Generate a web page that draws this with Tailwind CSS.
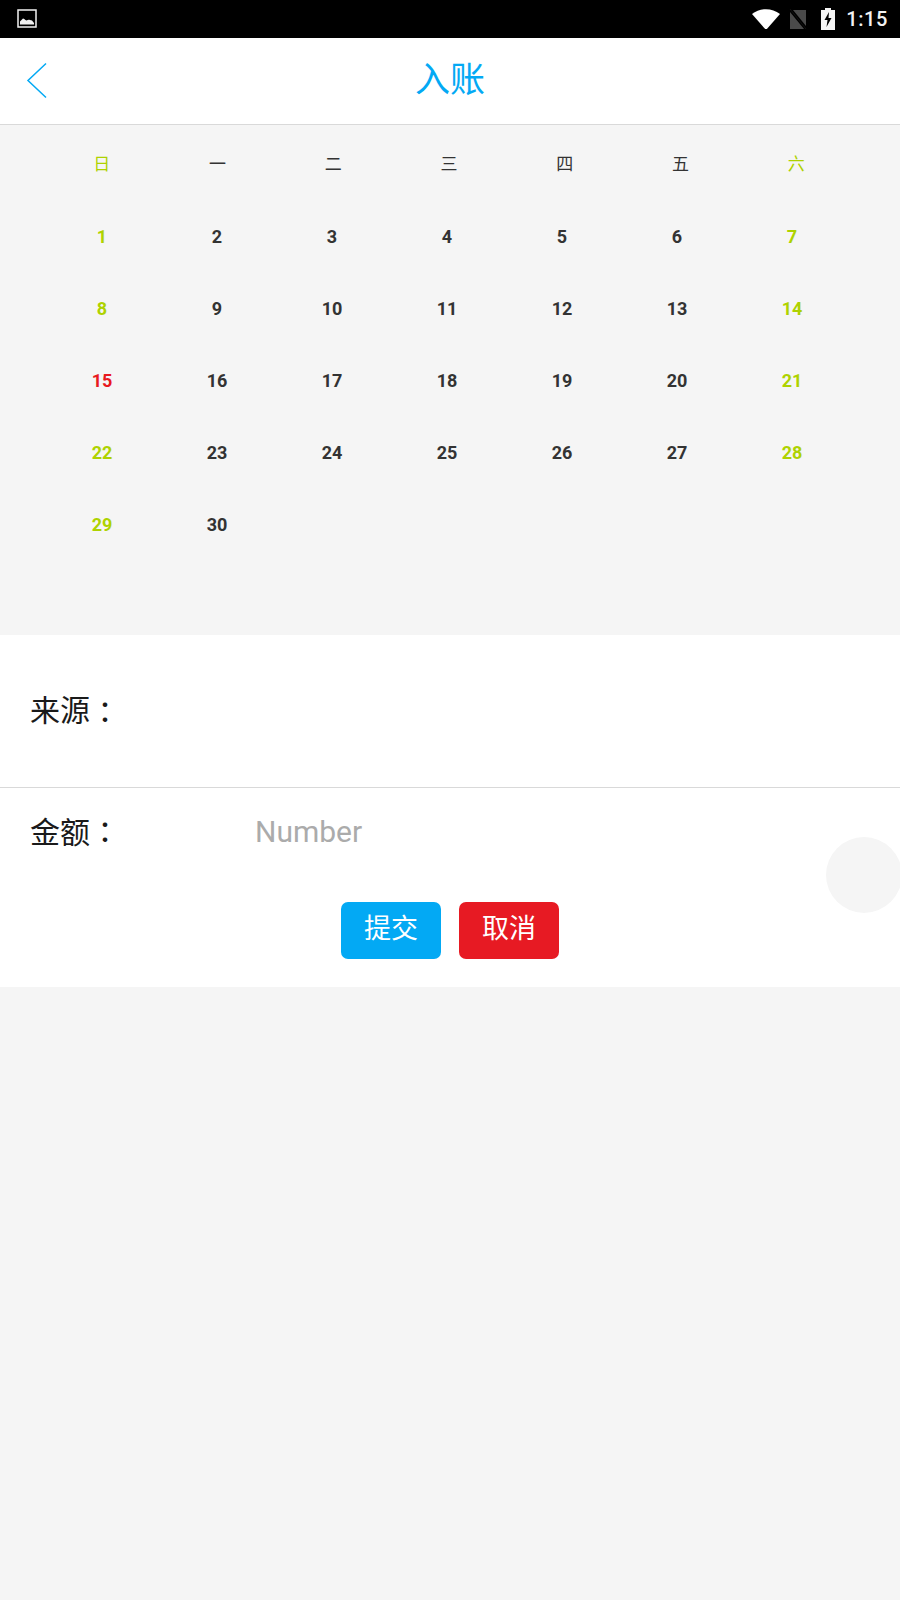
<!doctype html>
<html><head><meta charset="utf-8"><script src="https://cdn.jsdelivr.net/npm/@tailwindcss/browser@4"></script></head>
<body class="m-0">
<div class="relative w-[900px] h-[1600px] overflow-hidden bg-[#f5f5f5] flex flex-col font-['Roboto','Noto_Sans_CJK_SC',sans-serif]">
  <div class="h-[38px] bg-black flex items-center justify-between pl-[17px] pr-[12px] shrink-0">
    <svg width="20" height="20" viewBox="0 0 20 20"><rect x="1" y="1" width="18" height="17" fill="none" stroke="#f2f2f2" stroke-width="1.5"/><path d="M3 15.5V12.5L6 9.5C7 9.5 8 11 9.5 11.5C11 10.5 12 10.5 13 11L15 11.5L17 14V15.5Z" fill="#f2f2f2"/></svg>
    <div class="flex items-center">
      <svg width="28" height="20" viewBox="0 0 28 20" class="mr-[9px]"><path d="M0 5C8 -1.5 20 -1.5 28 5L14 21Z" fill="#fff"/></svg>
      <svg width="18" height="20" viewBox="0 0 18 20" class="mr-[14px]"><path d="M6 1H17V17L4 1ZM1 3L15 20H1Z" fill="#4a4a4a"/><path d="M1 0L17 20" stroke="#111" stroke-width="1"/></svg>
      <svg width="14" height="22" viewBox="0 0 14 22" class="mr-[11px]"><path d="M4 0H10V2H14V22H0V2H4Z" fill="#f5f5f5"/><path d="M8 4L3.5 12H6.5L5.5 19L10.5 10H7.5Z" fill="#000"/></svg>
      <span class="text-[20px] font-medium leading-none text-[#f2f2f2] tracking-[0.6px]">1:15</span>
    </div>
  </div>
  <header class="relative h-[87px] bg-white border-b border-[#d9d9d9] flex items-center justify-center shrink-0">
    <svg class="absolute left-[26px] top-[24px]" width="22" height="37" viewBox="0 0 22 37"><path d="M20 1.5L2 18.5L20 35.5" fill="none" stroke="#03a9f4" stroke-width="1.5"/></svg>
    <h1 class="text-[35px] font-normal leading-none text-[#03a9f4] -mt-[2px]">入账</h1>
  </header>
  <section class="h-[510px] shrink-0 pt-[19px]">
    <div class="grid grid-cols-7 ml-[44px] w-[810px] h-[42px] items-center text-center text-[17px] text-[#333]">
      <span class="text-[#aed200]">日</span><span>一</span><span>二</span><span>三</span><span>四</span><span>五</span><span class="text-[#aed200]">六</span>
    </div>
    <div class="grid grid-cols-7 ml-[44.5px] w-[805px] auto-rows-[72px] pt-[14px] items-center text-center text-[18px] font-bold text-[#333]">
      <span class="text-[#aed200]">1</span><span>2</span><span>3</span><span>4</span><span>5</span><span>6</span><span class="text-[#aed200]">7</span>
      <span class="text-[#aed200]">8</span><span>9</span><span>10</span><span>11</span><span>12</span><span>13</span><span class="text-[#aed200]">14</span>
      <span class="text-[#e8191f]">15</span><span>16</span><span>17</span><span>18</span><span>19</span><span>20</span><span class="text-[#aed200]">21</span>
      <span class="text-[#aed200]">22</span><span>23</span><span>24</span><span>25</span><span>26</span><span>27</span><span class="text-[#aed200]">28</span>
      <span class="text-[#aed200]">29</span><span>30</span>
    </div>
  </section>
  <section class="h-[352px] bg-white shrink-0 flex flex-col">
    <div class="h-[153px] border-b border-[#d9d9d9] flex items-center pl-[30px] pb-[1px] text-[30px] text-[#1a1a1a] shrink-0">来源<span class="font-['Noto_Sans_CJK_TC']">：</span></div>
    <div class="h-[89px] flex items-center pl-[30px] text-[30px] text-[#1a1a1a] shrink-0">
      <span class="w-[225px] -mt-[2px]">金额<span class="font-['Noto_Sans_CJK_TC']">：</span></span><span class="text-[#ababab] -mt-[2px]">Number</span>
    </div>
    <div class="flex justify-center gap-[18px] pt-[25px]">
      <button class="w-[100px] h-[57px] pb-[3px] rounded-[7px] bg-[#03a9f4] text-white text-[27px] leading-none">提交</button>
      <button class="w-[100px] h-[57px] pb-[3px] rounded-[7px] bg-[#e71a23] text-white text-[27px] leading-none">取消</button>
    </div>
  </section>
  <div class="absolute left-[826px] top-[837px] w-[76px] h-[76px] rounded-full bg-[#f5f5f5]"></div>
</div>
</body></html>
